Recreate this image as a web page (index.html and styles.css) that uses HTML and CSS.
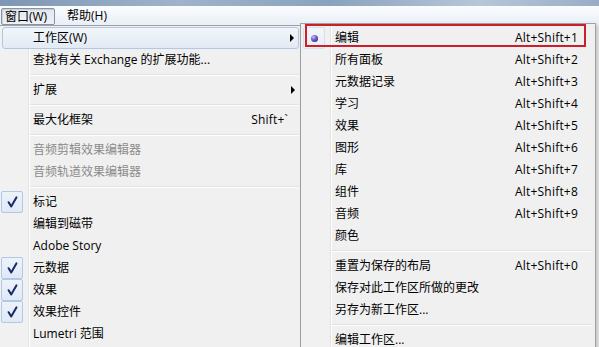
FILE: index.html
```html
<!DOCTYPE html>
<html lang="zh-CN">
<head>
<meta charset="utf-8">
<title>窗口菜单</title>
<link rel="stylesheet" href="styles.css">
</head>
<body>
<div class="screen">
  <div class="titlestrip"></div>
  <div class="menubar">
    <span class="mb-item pressed">窗口(W)</span>
    <span class="mb-item">帮助(H)</span>
  </div>
  <div class="menus">
    <div class="menu main">
      <div class="item hover"><span class="gut"></span><span class="label">工作区(W)</span><span class="arrow"></span></div>
      <div class="item"><span class="gut"></span><span class="label">查找有关 Exchange 的扩展功能...</span></div>
      <div class="sep"></div>
      <div class="item"><span class="gut"></span><span class="label">扩展</span><span class="arrow"></span></div>
      <div class="sep"></div>
      <div class="item"><span class="gut"></span><span class="label">最大化框架</span><span class="key">Shift+`</span></div>
      <div class="sep"></div>
      <div class="item disabled"><span class="gut"></span><span class="label">音频剪辑效果编辑器</span></div>
      <div class="item disabled"><span class="gut"></span><span class="label">音频轨道效果编辑器</span></div>
      <div class="sep"></div>
      <div class="item"><span class="gut"><span class="mark"><svg viewBox="0 0 22 22" width="22" height="22"><path d="M7.6 11.2 L10.2 15.4 L15.4 6.4" fill="none" stroke="#172a6b" stroke-width="2" stroke-linecap="round" stroke-linejoin="round"/></svg></span></span><span class="label">标记</span></div>
      <div class="item"><span class="gut"></span><span class="label">编辑到磁带</span></div>
      <div class="item"><span class="gut"></span><span class="label">Adobe Story</span></div>
      <div class="item"><span class="gut"><span class="mark"><svg viewBox="0 0 22 22" width="22" height="22"><path d="M7.6 11.2 L10.2 15.4 L15.4 6.4" fill="none" stroke="#172a6b" stroke-width="2" stroke-linecap="round" stroke-linejoin="round"/></svg></span></span><span class="label">元数据</span></div>
      <div class="item"><span class="gut"><span class="mark"><svg viewBox="0 0 22 22" width="22" height="22"><path d="M7.6 11.2 L10.2 15.4 L15.4 6.4" fill="none" stroke="#172a6b" stroke-width="2" stroke-linecap="round" stroke-linejoin="round"/></svg></span></span><span class="label">效果</span></div>
      <div class="item"><span class="gut"><span class="mark"><svg viewBox="0 0 22 22" width="22" height="22"><path d="M7.6 11.2 L10.2 15.4 L15.4 6.4" fill="none" stroke="#172a6b" stroke-width="2" stroke-linecap="round" stroke-linejoin="round"/></svg></span></span><span class="label">效果控件</span></div>
      <div class="item"><span class="gut"></span><span class="label">Lumetri 范围</span></div>
    </div>
    <div class="menu sub">
      <div class="item marked"><span class="gut"><span class="mark radio"><span class="bullet"></span></span></span><span class="label">编辑</span><span class="key">Alt+Shift+1</span></div>
      <div class="item"><span class="gut"></span><span class="label">所有面板</span><span class="key">Alt+Shift+2</span></div>
      <div class="item"><span class="gut"></span><span class="label">元数据记录</span><span class="key">Alt+Shift+3</span></div>
      <div class="item"><span class="gut"></span><span class="label">学习</span><span class="key">Alt+Shift+4</span></div>
      <div class="item"><span class="gut"></span><span class="label">效果</span><span class="key">Alt+Shift+5</span></div>
      <div class="item"><span class="gut"></span><span class="label">图形</span><span class="key">Alt+Shift+6</span></div>
      <div class="item"><span class="gut"></span><span class="label">库</span><span class="key">Alt+Shift+7</span></div>
      <div class="item"><span class="gut"></span><span class="label">组件</span><span class="key">Alt+Shift+8</span></div>
      <div class="item"><span class="gut"></span><span class="label">音频</span><span class="key">Alt+Shift+9</span></div>
      <div class="item"><span class="gut"></span><span class="label">颜色</span></div>
      <div class="sep"></div>
      <div class="item"><span class="gut"></span><span class="label">重置为保存的布局</span><span class="key">Alt+Shift+0</span></div>
      <div class="item"><span class="gut"></span><span class="label">保存对此工作区所做的更改</span></div>
      <div class="item"><span class="gut"></span><span class="label">另存为新工作区...</span></div>
      <div class="sep"></div>
      <div class="item"><span class="gut"></span><span class="label">编辑工作区...</span></div>
    </div>
  </div>
</div>
</body>
</html>
```
FILE: styles.css
```css
html, body {
  margin: 0;
  padding: 0;
}
body {
  width: 599px;
  height: 347px;
  overflow: hidden;
  background: #eeeeee;
  font-family: "Open Sans", "Noto Sans CJK SC", sans-serif;
  font-size: 12px;
  color: #000;
}
.screen {
  display: flex;
  flex-direction: column;
  width: 599px;
  height: 347px;
  overflow: hidden;
}
.titlestrip {
  height: 6px;
  flex: none;
  background: linear-gradient(90deg, #7e97b4 0%, #9fb4cb 30%, #8aa2bd 55%, #b6c7d9 80%, #98adc5 100%);
}
.menubar {
  height: 19px;
  flex: none;
  display: flex;
  align-items: flex-end;
  padding-left: 1px;
  background: linear-gradient(#fbfcfe, #e9eff6);
}
.mb-item {
  height: 17px;
  line-height: 15px;
  box-sizing: border-box;
  padding: 0 4px;
  margin-right: 4px;
  white-space: nowrap;
}
.mb-item.pressed {
  width: 54px;
  padding: 0 3px;
  border: 1px solid #8694a6;
  border-radius: 2px;
  background: linear-gradient(#e2e8ef, #eef2f7);
  box-shadow: inset 1px 1px 1px rgba(0,0,0,0.12);
}
.mb-item + .mb-item {
  margin-left: 4px;
}
.menus {
  flex: 1;
  display: flex;
  align-items: flex-start;
}
.menu {
  box-sizing: border-box;
  border: 1px solid #a0a0a0;
  border-bottom: 0;
  padding: 1px 2px 2px;
  background: linear-gradient(90deg, #f1f1f1 0 29px, #e2e3e3 29px 30px, #ffffff 30px 31px, #f0f0f0 31px);
}
.menu.main {
  margin-left: -2px;
  width: 304px;
  height: 340px;
}
.menu.sub {
  position: relative;
  z-index: 1;
  margin-left: -2px;
  margin-top: -2px;
  padding-top: 3px;
  width: 296px;
  height: 340px;
  box-shadow: 2px 2px 3px rgba(0,0,0,0.18);
}
.item {
  position: relative;
  display: flex;
  align-items: center;
  height: 22px;
  box-sizing: border-box;
  white-space: nowrap;
}
.item.hover {
  margin-left: 1px;
  border: 1px solid #b1c8e4;
  border-radius: 3px;
  background: linear-gradient(#f2f6fb, #e2eaf4);
}
.item.hover .gut {
  width: 26px;
}
.item.hover .label {
  padding-left: 4px;
}
.gut {
  width: 27px;
  height: 22px;
  flex: none;
  position: relative;
}
.label {
  padding-left: 5px;
  line-height: 22px;
}
.disabled .label {
  color: #8b8b8b;
}
.key {
  margin-left: auto;
  padding-right: 11px;
  line-height: 22px;
  letter-spacing: 0.2px;
}
.sub .key {
  padding-right: 15px;
}
.arrow {
  margin-left: auto;
  margin-right: 4px;
  width: 0;
  height: 0;
  border-top: 4px solid transparent;
  border-bottom: 4px solid transparent;
  border-left: 4px solid #000;
}
.mark {
  position: absolute;
  left: 0;
  top: 0;
  width: 22px;
  height: 22px;
  box-sizing: border-box;
  border: 1px solid #b0c9e6;
  border-radius: 2px;
  background: linear-gradient(#edf3fa, #e0e9f5);
  display: flex;
  align-items: center;
  justify-content: center;
}
.mark svg {
  position: absolute;
  left: -1px;
  top: -1px;
}
.mark.radio {
  border-color: #d6e1ee;
  background: linear-gradient(#f3f6fa, #e9eef5);
}
.bullet {
  width: 7px;
  height: 7px;
  border-radius: 50%;
  background: radial-gradient(circle at 35% 30%, #c8c2f5 0%, #7a6ed6 35%, #3c2f9c 75%, #2a2170 100%);
}
.item.marked::after {
  content: "";
  position: absolute;
  left: 2px;
  right: 7px;
  top: -3px;
  bottom: 2px;
  border: 2px solid #cc1f2c;
  pointer-events: none;
}
.sep {
  height: 8px;
  margin-left: 29px;
  position: relative;
}
.sep::before {
  content: "";
  position: absolute;
  left: 0;
  right: 0;
  top: 3px;
  height: 1px;
  background: #e0e0e0;
  border-bottom: 1px solid #ffffff;
}
```
